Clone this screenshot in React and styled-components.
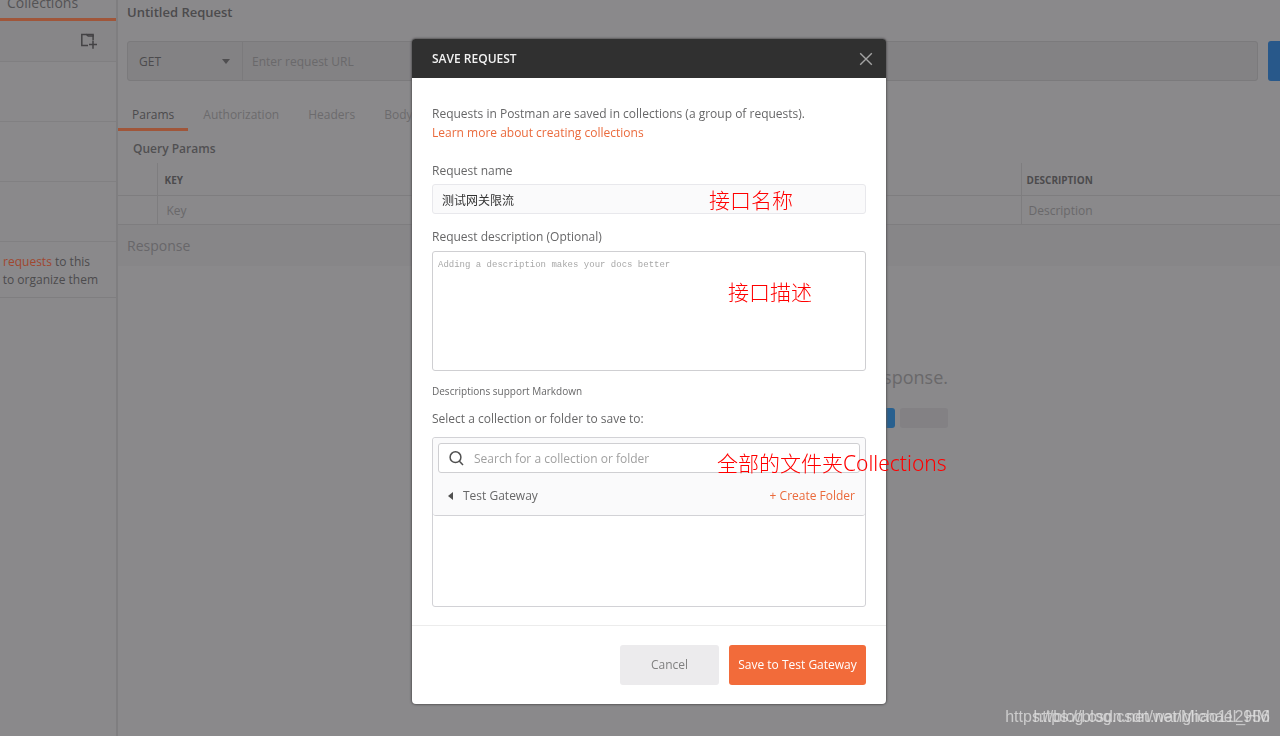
import React, { useState } from 'react'
import styled, { createGlobalStyle } from 'styled-components';

const GlobalStyle = createGlobalStyle`
  * { box-sizing: border-box; }
  body {
    margin: 0;
    background: #8a898b;
    color: #4c4b4d;
    font-family: 'Open Sans', 'Noto Sans CJK SC', sans-serif;
    font-size: 12px;
    line-height: 18px;
    overflow: hidden;
  }
  button, input, textarea, select { font: inherit; color: inherit; }
  button { border: 0; cursor: pointer; }
  a { text-decoration: none; }
`

const tabs = ['Params', 'Authorization', 'Headers', 'Body'];

const CloseIcon = () => (
  <svg width="14" height="14" viewBox="0 0 14 14" fill="none" stroke="#a3a3a3" strokeWidth="1.4">
    <path d="M1.2 1.2l11.6 11.6M12.8 1.2L1.2 12.8" />
  </svg>
)

const SearchIcon = () => (
  <svg width="15" height="15" viewBox="0 0 15 15" fill="none" stroke="#505050" strokeWidth="1.5">
    <circle cx="6.5" cy="6.2" r="5.4" />
    <path d="M10.2 10l3.8 4" />
  </svg>
)

const NewCollectionIcon = () => (
  <svg width="18" height="16" viewBox="0 0 18 16" fill="none" stroke="#434244" strokeWidth="1.5">
    <path d="M8 12.5H1.8V1.5h4.6l1.8 1.6h4.9v4" />
    <path d="M6.4 1.5h6.7v2" />
    <path d="M13 7.4v8.4M9 11.6h8" />
  </svg>
)

const Sidebar = () => (
  <SidebarBox>
    <SidebarTab type="button">Collections</SidebarTab>
    <SidebarTools>
      <IconButton type="button" aria-label="New collection"><NewCollectionIcon /></IconButton>
    </SidebarTools>
    <SidebarRow />
    <SidebarRow />
    <SidebarRow />
    <SidebarNote>
      <NoteLine $end={26}><a href="#requests">d requests</a>&nbsp;to this</NoteLine>
      <NoteLine $end={18}>s to organize them</NoteLine>
    </SidebarNote>
  </SidebarBox>
)

const RequestBuilder = () => (
  <Builder>
    <RequestTitle>Untitled Request</RequestTitle>
    <UrlRow>
      <UrlBar>
        <MethodBox>
          <Method aria-label="Method" defaultValue="GET">
            <option>GET</option>
            <option>POST</option>
          </Method>
          <svg width="8" height="5" viewBox="0 0 8 5"><path d="M0 0h8L4 5z" fill="#4f4e50" /></svg>
        </MethodBox>
        <UrlInput aria-label="Request URL" placeholder="Enter request URL" />
      </UrlBar>
      <SendButton type="button" aria-label="Send" />
    </UrlRow>
    <Tabs>
      {tabs.map((tab, i) => <Tab key={tab} type="button" $active={i === 0}>{tab}</Tab>)}
    </Tabs>
    <SectionTitle>Query Params</SectionTitle>
    <ParamsTable>
      <thead>
        <tr>
          <CheckHead />
          <th>KEY</th>
          <DescriptionHead>DESCRIPTION</DescriptionHead>
        </tr>
      </thead>
      <tbody>
        <tr>
          <td />
          <td>Key</td>
          <td>Description</td>
        </tr>
      </tbody>
    </ParamsTable>
    <ResponseBar>Response</ResponseBar>
    <EmptyResponse>
      <p>response.</p>
      <div>
        <Chip $color="#28608f" $width={80} />
        <Chip $color="#838184" $width={48} />
      </div>
    </EmptyResponse>
  </Builder>
)

const SaveRequestModal = () => {
  const [name, setName] = useState('测试网关限流');

  return (
    <Modal role="dialog" aria-labelledby="modal-title">
      <ModalHeader>
        <h2 id="modal-title">SAVE REQUEST</h2>
        <IconButton type="button" aria-label="Close"><CloseIcon /></IconButton>
      </ModalHeader>
      <ModalBody>
        <Intro>
          Requests in Postman are saved in collections (a group of requests).<br />
          <a href="#learn">Learn more about creating collections</a>
        </Intro>
        <Field>
          <label htmlFor="name">Request name</label>
          <NameInput id="name" value={name} onChange={(e) => setName(e.target.value)} />
        </Field>
        <Field>
          <label htmlFor="description">Request description (Optional)</label>
          <Description id="description" placeholder="Adding a description makes your docs better" />
        </Field>
        <Hint>Descriptions support Markdown</Hint>
        <PickerLabel htmlFor="search">Select a collection or folder to save to:</PickerLabel>
        <Picker>
          <PickerTop>
            <SearchBox>
              <SearchIcon />
              <input id="search" placeholder="Search for a collection or folder" />
            </SearchBox>
            <FolderRow>
              <FolderButton type="button">
                <svg width="5" height="8" viewBox="0 0 5 8"><path d="M5 0v8L0 4z" fill="#505050" /></svg>
                Test Gateway
              </FolderButton>
              <a href="#create">+ Create Folder</a>
            </FolderRow>
          </PickerTop>
        </Picker>
      </ModalBody>
      <ModalFooter>
        <Button type="button" $width={99}>Cancel</Button>
        <Button type="button" $width={137} $primary>Save to Test Gateway</Button>
      </ModalFooter>
      <Note $left={297} $top={147}>接口名称</Note>
      <Note $left={316} $top={239}>接口描述</Note>
      <Note $left={305} $top={410}>全部的文件夹Collections</Note>
    </Modal>
  )
}

const App = () => {
  return (
    <Page>
      <GlobalStyle />
      <Sidebar />
      <RequestBuilder />
      <Overlay>
        <SaveRequestModal />
      </Overlay>
      <Watermark>https://blog.csdn.net/wanghao112956</Watermark>
      <Watermark>https://blog.csdn.net/Michael_HM</Watermark>
    </Page>
  )
}

const Page = styled.div`
  display: flex;
  min-height: 100vh;
  overflow: hidden;
`

const IconButton = styled.button`
  display: flex;
  padding: 0;
  background: none;
`

const SidebarBox = styled.aside`
  flex: none;
  width: 118px;
  overflow: hidden;
  border-right: 2px solid #7f7e80;
`

const SidebarTab = styled.button`
  display: block;
  width: 100%;
  height: 21px;
  padding: 0 0 12px 7px;
  background: none;
  border-bottom: 3px solid #a0563a;
  font-size: 14px;
  line-height: 6px;
  text-align: left;
  color: #545355;
`

const SidebarTools = styled.div`
  display: flex;
  align-items: center;
  justify-content: flex-end;
  height: 41px;
  padding-right: 18px;
  background: #878688;
  border-bottom: 1px solid #807f81;
`

const SidebarRow = styled.div`
  height: 60px;
  border-bottom: 1px solid #818082;
`

const SidebarNote = styled.div`
  padding: 11px 0 8px;
  border-bottom: 1px solid #7f7e80;
`

const NoteLine = styled.div`
  display: flex;
  justify-content: flex-end;
  padding-right: ${({ $end }) => $end}px;
  white-space: nowrap;

  a { color: #a0472f; }
`

const Builder = styled.main`
  flex: 1;
  min-width: 0;
`

const RequestTitle = styled.h1`
  margin: 0;
  padding: 3px 9px 20px;
  font-size: 13px;
  font-weight: 600;
  line-height: 18px;
`

const UrlRow = styled.div`
  display: flex;
  gap: 10px;
  padding-left: 9px;
`

const UrlBar = styled.div`
  display: flex;
  flex: 1;
  height: 40px;
  background: #838284;
  border: 1px solid #7b7a7c;
  border-radius: 3px;
`

const MethodBox = styled.div`
  display: flex;
  align-items: center;
  width: 115px;
  padding: 1px 12px 0 11px;
  border-right: 1px solid #7b7a7c;
`

const Method = styled.select`
  flex: 1;
  padding: 0;
  appearance: none;
  background: none;
  border: 0;
`

const UrlInput = styled.input`
  flex: 1;
  padding: 1px 9px 0;
  background: none;
  border: 0;
  &::placeholder { color: #6a696b; }
`

const SendButton = styled.button`
  width: 12px;
  padding: 0;
  background: #28588a;
  border-radius: 3px 0 0 3px;
`

const Tabs = styled.div`
  display: flex;
  gap: 1px;
  padding-top: 16px;
`

const Tab = styled.button`
  height: 34px;
  padding: 4px 14px 0;
  background: none;
  border-bottom: 3px solid ${({ $active }) => $active ? '#a0563a' : 'transparent'};
  color: ${({ $active }) => $active ? '#4c4b4d' : '#6c6b6d'};
`

const SectionTitle = styled.h2`
  margin: 0;
  padding: 9px 15px 5px;
  font-size: 12px;
  font-weight: 600;
  line-height: 18px;
  color: #515052;
`

const ParamsTable = styled.table`
  width: 100%;
  border-collapse: collapse;
  table-layout: fixed;
  text-align: left;

  th, td {
    padding: 2px 7px 0;
    border-bottom: 1px solid #7e7d7f;
  }
  th { height: 32px; font-size: 10px; font-weight: 700; }
  th:last-child { padding-left: 5px; }
  td { height: 29px; padding: 2px 9px 0; color: #69686a; }
  td:last-child { padding-left: 7px; }
  th + th, td + td { border-left: 1px solid #7e7d7f; }
`

const CheckHead = styled.th`
  width: 39px;
`

const DescriptionHead = styled.th`
  width: 259px;
`

const ResponseBar = styled.div`
  padding: 12px 9px 11px;
  background: #878688;
  font-size: 14px;
  color: #68676a;
`

const EmptyResponse = styled.div`
  display: flex;
  flex-direction: column;
  align-items: flex-end;
  gap: 18px;
  padding: 98px 332px 0 0;

  p { margin: 0; font-size: 18px; line-height: 26px; color: #69686a; }
  div { display: flex; gap: 5px; }
`

const Chip = styled.span`
  width: ${({ $width }) => $width}px;
  height: 20px;
  background: ${({ $color }) => $color};
  border-radius: 3px;
`

const Overlay = styled.div`
  position: fixed;
  inset: 0;
  display: flex;
  align-items: flex-start;
  justify-content: center;
  padding: 39px 0 0 18px;
`

const Modal = styled.section`
  position: relative;
  width: 474px;
  background: #fff;
  border-radius: 4px;
  box-shadow: 0 0 2px 1px #5b5a5c;
  color: #676768;

  a { color: #ea6a3c; }
`

const ModalHeader = styled.header`
  display: flex;
  align-items: center;
  justify-content: space-between;
  height: 39px;
  padding: 0 13px 0 20px;
  background: #303030;
  border-radius: 3px 3px 0 0;
  color: #f2f2f2;

  h2 { margin: 0; font-size: 12px; font-weight: 600; }
`

const ModalBody = styled.div`
  padding: 26px 20px 18px;
  border-bottom: 1px solid #ececec;
`

const Intro = styled.p`
  margin: 0 0 20px;
  line-height: 19px;
`

const Field = styled.div`
  margin-bottom: 14px;

  label { display: block; margin-bottom: 4px; }
  & + & label { margin-bottom: 5px; }
`

const NameInput = styled.input`
  display: block;
  width: 100%;
  height: 30px;
  padding: 2px 9px 0;
  background: #fafafb;
  border: 1px solid #e8e8ec;
  border-radius: 3px;
  color: #333;
`

const Description = styled.textarea`
  display: block;
  width: 100%;
  height: 120px;
  padding: 4px 5px;
  border: 1px solid #cfcfd2;
  border-radius: 3px;
  resize: none;
  font-family: 'Liberation Mono', monospace;
  font-size: 9px;
  &::placeholder { color: #a8a8a8; }
`

const Hint = styled.p`
  margin: -3px 0 10px;
  font-size: 10px;
`

const PickerLabel = styled.label`
  display: block;
  margin-bottom: 9px;
`

const Picker = styled.div`
  height: 170px;
  border: 1px solid #d2d2d6;
  border-radius: 3px;
`

const PickerTop = styled.div`
  padding: 5px 5px 0;
  background: #fafafb;
  border-bottom: 1px solid #d2d2d6;
  border-radius: 3px;
`

const SearchBox = styled.div`
  display: flex;
  align-items: center;
  gap: 10px;
  height: 30px;
  padding: 0 10px;
  background: #fff;
  border: 1px solid #cfcfd2;
  border-radius: 3px;

  input {
    flex: 1;
    padding: 2px 0 0;
    background: none;
    border: 0;
    outline: 0;
  }
  input::placeholder { color: #a0a0a0; }
`

const FolderRow = styled.div`
  display: flex;
  align-items: center;
  justify-content: space-between;
  height: 42px;
  padding: 4px 5px 0 10px;
`

const FolderButton = styled.button`
  display: flex;
  align-items: center;
  gap: 10px;
  padding: 0;
  background: none;
`

const ModalFooter = styled.footer`
  display: flex;
  justify-content: flex-end;
  gap: 10px;
  padding: 19px 20px;
`

const Button = styled.button`
  width: ${({ $width }) => $width}px;
  height: 40px;
  padding: 0;
  border-radius: 3px;
  white-space: nowrap;
  background: ${({ $primary }) => $primary ? '#f26b3a' : '#ecebed'};
  color: ${({ $primary }) => $primary ? '#fff' : '#808080'};
`

const Note = styled.span`
  position: absolute;
  left: ${({ $left }) => $left}px;
  top: ${({ $top }) => $top}px;
  font-family: 'Noto Sans', 'Noto Sans CJK SC', sans-serif;
  font-size: 21px;
  font-weight: 300;
  line-height: 28px;
  white-space: nowrap;
  color: #ff0000;
`

const Watermark = styled.span`
  position: fixed;
  right: 10px;
  bottom: 10px;
  font-family: 'Liberation Sans', Arial, sans-serif;
  font-size: 16px;
  color: rgba(225, 225, 225, .75);
`

export default App;
